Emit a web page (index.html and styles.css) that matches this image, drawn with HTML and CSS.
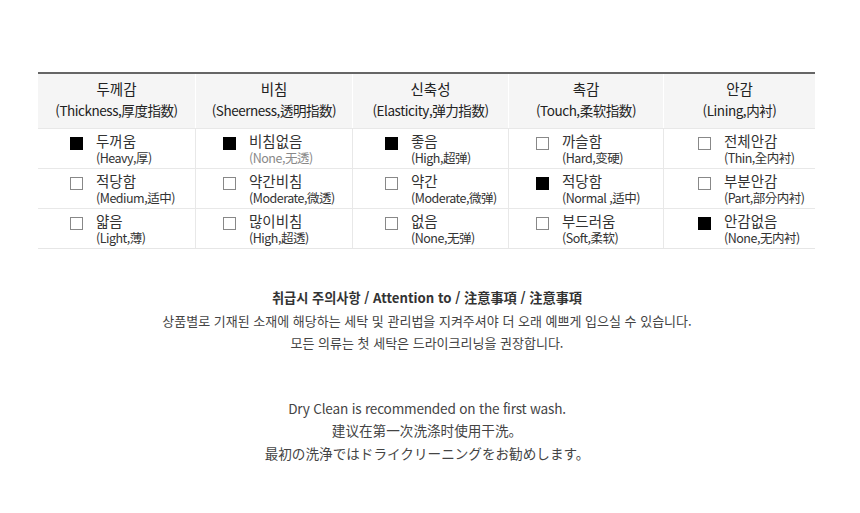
FILE: index.html
```html
<!DOCTYPE html>
<html lang="ko">
<head>
<meta charset="utf-8">
<link rel="stylesheet" href="styles.css">
</head>
<body>
<div class="page">
  <div class="spec">
    <div class="col">
      <div class="head"><div class="ttl">두께감</div><div class="sub">(Thickness,厚度指数)</div></div>
      <div class="cell"><span class="box on"></span><div><div class="lbl">두꺼움</div><div class="en">(Heavy,厚)</div></div></div>
      <div class="cell"><span class="box"></span><div><div class="lbl">적당함</div><div class="en">(Medium,适中)</div></div></div>
      <div class="cell"><span class="box"></span><div><div class="lbl">얇음</div><div class="en">(Light,薄)</div></div></div>
    </div>
    <div class="col">
      <div class="head"><div class="ttl">비침</div><div class="sub">(Sheerness,透明指数)</div></div>
      <div class="cell c2"><span class="box on"></span><div><div class="lbl">비침없음</div><div class="en light">(None,无透)</div></div></div>
      <div class="cell c2"><span class="box"></span><div><div class="lbl">약간비침</div><div class="en">(Moderate,微透)</div></div></div>
      <div class="cell c2"><span class="box"></span><div><div class="lbl">많이비침</div><div class="en">(High,超透)</div></div></div>
    </div>
    <div class="col">
      <div class="head"><div class="ttl">신축성</div><div class="sub">(Elasticity,弹力指数)</div></div>
      <div class="cell"><span class="box on"></span><div><div class="lbl">좋음</div><div class="en">(High,超弹)</div></div></div>
      <div class="cell"><span class="box"></span><div><div class="lbl">약간</div><div class="en">(Moderate,微弹)</div></div></div>
      <div class="cell"><span class="box"></span><div><div class="lbl">없음</div><div class="en">(None,无弹)</div></div></div>
    </div>
    <div class="col">
      <div class="head"><div class="ttl">촉감</div><div class="sub">(Touch,柔软指数)</div></div>
      <div class="cell c2"><span class="box"></span><div><div class="lbl">까슬함</div><div class="en">(Hard,变硬)</div></div></div>
      <div class="cell c2"><span class="box on"></span><div><div class="lbl">적당함</div><div class="en">(Normal ,适中)</div></div></div>
      <div class="cell c2"><span class="box"></span><div><div class="lbl">부드러움</div><div class="en">(Soft,柔软)</div></div></div>
    </div>
    <div class="col last">
      <div class="head"><div class="ttl">안감</div><div class="sub">(Lining,内衬)</div></div>
      <div class="cell c5"><span class="box"></span><div><div class="lbl">전체안감</div><div class="en">(Thin,全内衬)</div></div></div>
      <div class="cell c5"><span class="box"></span><div><div class="lbl">부분안감</div><div class="en">(Part,部分内衬)</div></div></div>
      <div class="cell c5"><span class="box on"></span><div><div class="lbl">안감없음</div><div class="en">(None,无内衬)</div></div></div>
    </div>
  </div>

  <div class="notice">
    <p class="nt-head">취급시 주의사항 / Attention to / 注意事項 / 注意事項</p>
    <p>상품별로 기재된 소재에 해당하는 세탁 및 관리법을 지켜주셔야 더 오래 예쁘게 입으실 수 있습니다.</p>
    <p>모든 의류는 첫 세탁은 드라이크리닝을 권장합니다.</p>
    <p class="blank">&nbsp;</p>
    <p class="blank">&nbsp;</p>
    <p class="latin">Dry Clean is recommended on the first wash.</p>
    <p class="cjk" lang="zh">建议在第一次洗涤时使用干洗。</p>
    <p class="cjk" lang="ja">最初の洗浄ではドライクリーニングをお勧めします。</p>
  </div>
</div>
</body>
</html>
```
FILE: styles.css
```css
* { box-sizing: border-box; }
html, body { margin: 0; padding: 0; background: #fff; }
body {
  font-family: "Noto Sans CJK KR", "Noto Sans", sans-serif;
  color: #333;
}
.page { padding-top: 72px; }
.spec {
  margin-left: 38px;
  width: 777px;
  display: grid;
  grid-template-columns: 158px 157px 156px 155px 151px;
  border-top: 2px solid #666;
  border-bottom: 1px solid #e6e6e6;
}
.col { display: flex; flex-direction: column; border-right: 1px solid #e8e8e8; }
.col.last { border-right: none; }
.head {
  height: 54px;
  background: #f5f5f5;
  text-align: center;
  padding-top: 3px;
  border-right: 1px solid #fff;
  margin-right: -1px;
}
.col.last .head { margin-right: 0; border-right: none; }
.ttl { font-size: 14.5px; line-height: 23px; color: #222; }
.sub { font-size: 13.5px; line-height: 20px; letter-spacing: -0.45px; color: #222; }
.cell {
  height: 40px;
  display: flex;
  align-items: flex-start;
  padding-left: 32px;
  padding-top: 3px;
  border-top: 1px solid #e8e8e8;
}
.col .cell:first-of-type { border-top: none; }
.cell.c2 { padding-left: 27px; }
.cell.c5 { padding-left: 34px; }
.box {
  width: 13px; height: 13px;
  border: 1px solid #888;
  background: #fff;
  margin-top: 5px;
  margin-right: 13px;
  flex: none;
}
.box.on { background: #000; border-color: #000; }
.lbl { font-size: 14.5px; line-height: 18px; color: #333; }
.en { font-size: 12.5px; line-height: 16px; letter-spacing: -0.5px; color: #333; }
.en.light { color: #888; }

.notice {
  margin-top: 38px;
  margin-left: 38px;
  width: 778px;
  text-align: center;
  font-size: 13px;
  line-height: 22.5px;
  color: #444;
}
.notice p { margin: 0; }
.notice .blank { line-height: 21px; }
.nt-head { font-weight: 700; color: #333; font-size: 13.2px; }
.latin { font-size: 13.6px; letter-spacing: -0.2px; }
.cjk { font-size: 13.6px; }
.cjk:lang(zh) { font-family: "Noto Sans CJK SC", sans-serif; }
.cjk:lang(ja) { font-family: "Noto Sans CJK JP", sans-serif; }
```
